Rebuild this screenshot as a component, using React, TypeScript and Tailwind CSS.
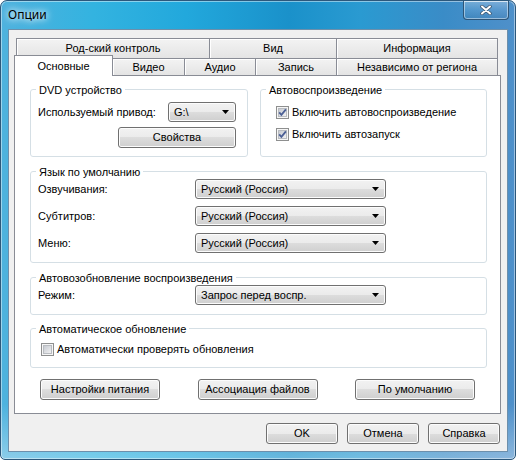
import React from "react";

// Win7-style dialog: tabbed options sheet with group boxes and combo boxes

const backTabs = [
  { label: "Род-ский контроль", w: "w-[194px]" },
  { label: "Вид", w: "w-[127px]" },
  { label: "Информация", w: "w-[161px]" },
];

const frontTabs = [
  { label: "Видео", w: "w-[72px]" },
  { label: "Аудио", w: "w-[71px]" },
  { label: "Запись", w: "w-[81px]" },
  { label: "Независимо от региона", w: "w-[161px]" },
];

const aeroFace =
  "bg-[linear-gradient(180deg,#f2f2f2_0%,#ebebeb_50%,#dddddd_50%,#cfcfcf_100%)] shadow-[inset_0_0_0_1px_#fcfcfc]";

function Button({ label, className = "" }: { label: string; className?: string }) {
  return (
    <button
      className={`flex h-[21px] items-center justify-center rounded-[3px] border border-[#707070] text-black ${aeroFace} ${className}`}
    >
      {label}
    </button>
  );
}

function Combo({ value, className = "" }: { value: string; className?: string }) {
  return (
    <div
      className={`flex h-[20px] items-center justify-between rounded-[3px] border border-[#707070] pl-[5px] pr-[6px] ${aeroFace} ${className}`}
    >
      <span>{value}</span>
      <svg width="7" height="4" viewBox="0 0 7 4">
        <path d="M0 0h7L3.5 4z" fill="#000" />
      </svg>
    </div>
  );
}

function CheckBox({ checked }: { checked: boolean }) {
  return (
    <svg width="13" height="13" viewBox="0 0 13 13" className="shrink-0">
      <defs>
        <linearGradient id="cbFill" x1="0" y1="0" x2="1" y2="1">
          <stop offset="0" stopColor="#c4c8cf" />
          <stop offset="1" stopColor="#f3f3f4" />
        </linearGradient>
      </defs>
      <rect x="0.5" y="0.5" width="12" height="12" fill="#f6f6f6" stroke="#8e8f8f" />
      <rect x="2.5" y="2.5" width="8" height="8" fill="url(#cbFill)" stroke="#b9bcc1" />
      {checked && (
        <path d="M3.2 6.4 5.4 8.9 9.9 3.4" fill="none" stroke="#4b5f95" strokeWidth="1.8" />
      )}
    </svg>
  );
}

function Check({ label, checked }: { label: string; checked: boolean }) {
  return (
    <label className="flex h-[17px] items-center gap-[3px]">
      <CheckBox checked={checked} />
      <span>{label}</span>
    </label>
  );
}

function Group({
  title,
  className = "",
  children,
}: {
  title: string;
  className?: string;
  children: React.ReactNode;
}) {
  return (
    <fieldset className={`rounded-[3px] border border-[#d5dfe5] px-[5px] ${className}`}>
      <legend className="px-[3px] pt-[3px] leading-[13px]">{title}</legend>
      {children}
    </fieldset>
  );
}

function LangRow({ label, value }: { label: string; value: string }) {
  return (
    <div className="flex h-[20px] items-center pl-[2px]">
      <span className="w-[157px]">{label}</span>
      <Combo value={value} className="w-[191px]" />
    </div>
  );
}

export default function App() {
  return (
    <div className="h-[460px] w-[516px] overflow-hidden rounded-t-[7px] rounded-b-[5px] border border-[#2c587c] bg-[linear-gradient(180deg,transparent_88%,rgba(255,255,255,0.35)),linear-gradient(90deg,#4fb2de_0%,#33b3e0_18%,#22a8dc_36%,#1a91ca_56%,#2a9ad1_70%,#3a8cc7_86%,#4f90ca_100%)] font-['Liberation_Sans',Arial,sans-serif] text-[11px] text-black shadow-[inset_0_0_0_1px_rgba(255,255,255,0.45)]">
      {/* title bar */}
      <div className="flex h-[28px] items-start justify-between">
        <span className="pl-[7px] pt-[6px] font-['Noto_Sans',sans-serif] text-[12px] leading-[16px] [text-shadow:0_0_10px_#fff,0_0_6px_#fff]">
          Опции
        </span>
        <div className="mr-[6px] flex h-[19px] w-[46px] items-center justify-center rounded-b-[4px] border border-t-0 border-[#2d5578] bg-[linear-gradient(180deg,rgba(255,255,255,0.28),rgba(255,255,255,0.08)_50%,rgba(0,0,0,0.06))] shadow-[inset_0_0_0_1px_rgba(255,255,255,0.45)]">
          <svg width="12" height="10" viewBox="0 0 12 10">
            <path d="M2 1.5 10 8.5M10 1.5 2 8.5" stroke="#3a4f66" strokeWidth="3.4" strokeLinecap="round" />
            <path d="M2 1.5 10 8.5M10 1.5 2 8.5" stroke="#fff" strokeWidth="2" strokeLinecap="round" />
          </svg>
        </div>
      </div>

      {/* client area */}
      <div className="mx-[7px] flex h-[423px] w-[500px] flex-col border border-[#6d8fab] bg-[#f0f0f0] pt-[8px]">
        <div className="ml-[5px] flex w-[487px] flex-col">
          <div className="flex h-[20px] pl-[2px]">
            {backTabs.map((t, i) => (
              <div
                key={t.label}
                className={`flex items-center justify-center border-t border-r border-[#898c95] bg-[linear-gradient(180deg,#f3f3f3,#e4e4e4)] shadow-[inset_1px_1px_0_#fff] ${t.w} ${i === 0 ? "border-l" : ""}`}
              >
                {t.label}
              </div>
            ))}
          </div>
          <div className="flex h-[17px] items-end pl-[2px]">
            <div className="relative z-10 -mb-[1px] -ml-[2px] flex h-[21px] w-[99px] items-center justify-center border border-b-0 border-[#898c95] bg-white">
              Основные
            </div>
            {frontTabs.map((t) => (
              <div
                key={t.label}
                className={`flex h-[17px] items-center justify-center border-t border-r border-[#898c95] bg-[linear-gradient(180deg,#f3f3f3,#e4e4e4)] shadow-[inset_1px_1px_0_#fff] ${t.w}`}
              >
                {t.label}
              </div>
            ))}
          </div>

          {/* tab page */}
          <div className="flex h-[339px] flex-col border border-[#898c95] bg-white pt-[5px] pl-[15px] pr-[13px]">
            <div className="flex h-[76px] gap-[12px]">
              <Group title="DVD устройство" className="w-[218px]">
                <div className="mt-[5px] flex flex-col pl-[2px] pr-[6px]">
                  <div className="flex h-[20px] items-center justify-between">
                    <span>Используемый привод:</span>
                    <Combo value="G:\" className="w-[68px]" />
                  </div>
                  <div className="mt-[5px] flex justify-end">
                    <Button label="Свойства" className="w-[118px]" />
                  </div>
                </div>
              </Group>
              <Group title="Автовоспроизведение" className="w-[227px]">
                <div className="mt-[7px] flex flex-col gap-[5px] pl-[10px]">
                  <Check label="Включить автовоспроизведение" checked />
                  <Check label="Включить автозапуск" checked />
                </div>
              </Group>
            </div>

            <Group title="Язык по умолчанию" className="mt-[6px] h-[100px]">
              <div className="flex flex-col gap-[7px]">
                <LangRow label="Озвучивания:" value="Русский (Россия)" />
                <LangRow label="Субтитров:" value="Русский (Россия)" />
                <LangRow label="Меню:" value="Русский (Россия)" />
              </div>
            </Group>

            <Group title="Автовозобновление воспроизведения" className="mt-[6px] h-[46px]">
              <LangRow label="Режим:" value="Запрос перед воспр." />
            </Group>

            <Group title="Автоматическое обновление" className="mt-[5px] h-[48px]">
              <div className="mt-[5px] pl-[5px]">
                <Check label="Автоматически проверять обновления" checked={false} />
              </div>
            </Group>

            <div className="mt-[11px] flex justify-between pl-[10px] pr-[12px]">
              <Button label="Настройки питания" className="w-[120px]" />
              <Button label="Ассоциация файлов" className="w-[120px]" />
              <Button label="По умолчанию" className="w-[120px]" />
            </div>
          </div>
        </div>

        <div className="mt-[9px] flex justify-end gap-[9px] pr-[7px]">
          <Button label="OK" className="w-[72px]" />
          <Button label="Отмена" className="w-[72px]" />
          <Button label="Справка" className="w-[72px]" />
        </div>
      </div>
    </div>
  );
}
